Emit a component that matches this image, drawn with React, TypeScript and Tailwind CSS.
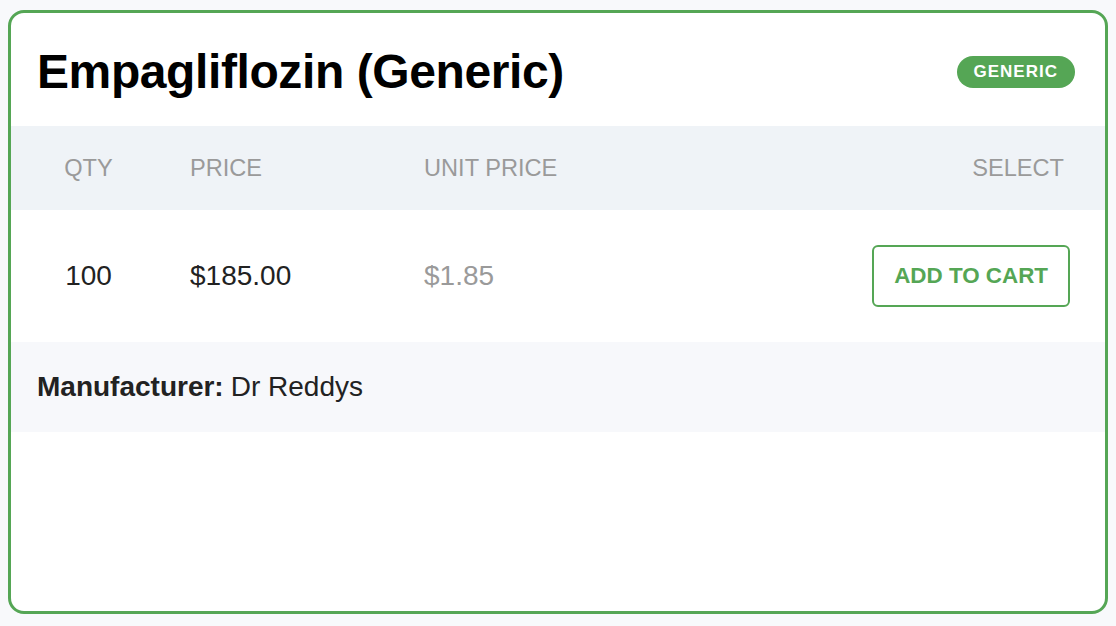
export default function App() {
  return (
    <div className="min-h-screen bg-[#f8f9fb] pt-[10px] pl-2 font-['Liberation_Sans',Arial,sans-serif]">
      <div className="w-[1100px] h-[604px] bg-white border-[3px] border-[#55a655] rounded-[16px] overflow-hidden">
        {/* Title */}
        <div className="h-[113px] flex items-center justify-between pt-[4px] pl-[26px] pr-[30px]">
          <h1 className="text-[48px] font-bold text-black tracking-[-0.4px] leading-none">
            Empagliflozin (Generic)
          </h1>
          <span className="h-[32px] flex items-center px-[17px] rounded-full bg-[#55a655] text-white text-[17px] font-bold tracking-[1px]">
            GENERIC
          </span>
        </div>

        {/* Table header */}
        <div className="grid grid-cols-[155px_234px_1fr_auto] items-center h-[84px] pt-[2px] bg-[#eff3f7] text-[23.6px] text-[#9a9a9a]">
          <div className="text-center">QTY</div>
          <div className="pl-6">PRICE</div>
          <div className="pl-6">UNIT PRICE</div>
          <div className="pr-[41px] text-right">SELECT</div>
        </div>

        {/* Row */}
        <div className="grid grid-cols-[155px_234px_1fr_auto] items-center h-[132px] text-[28px]">
          <div className="text-center text-[#222]">100</div>
          <div className="pl-6 text-[#222]">$185.00</div>
          <div className="pl-6 text-[#9a9a9a]">$1.85</div>
          <div className="pr-[35px] flex justify-end">
            <button className="h-[62px] px-[20px] border-2 border-[#55a655] rounded-[6px] text-[22.4px] font-bold text-[#55a655]">
              ADD TO CART
            </button>
          </div>
        </div>

        {/* Manufacturer */}
        <div className="h-[90px] flex items-center pl-[26px] bg-[#f7f8fb] text-[28px] text-[#222]">
          <span className="font-bold">Manufacturer:</span>
          <span className="ml-[7px]">Dr Reddys</span>
        </div>
      </div>
    </div>
  );
}
